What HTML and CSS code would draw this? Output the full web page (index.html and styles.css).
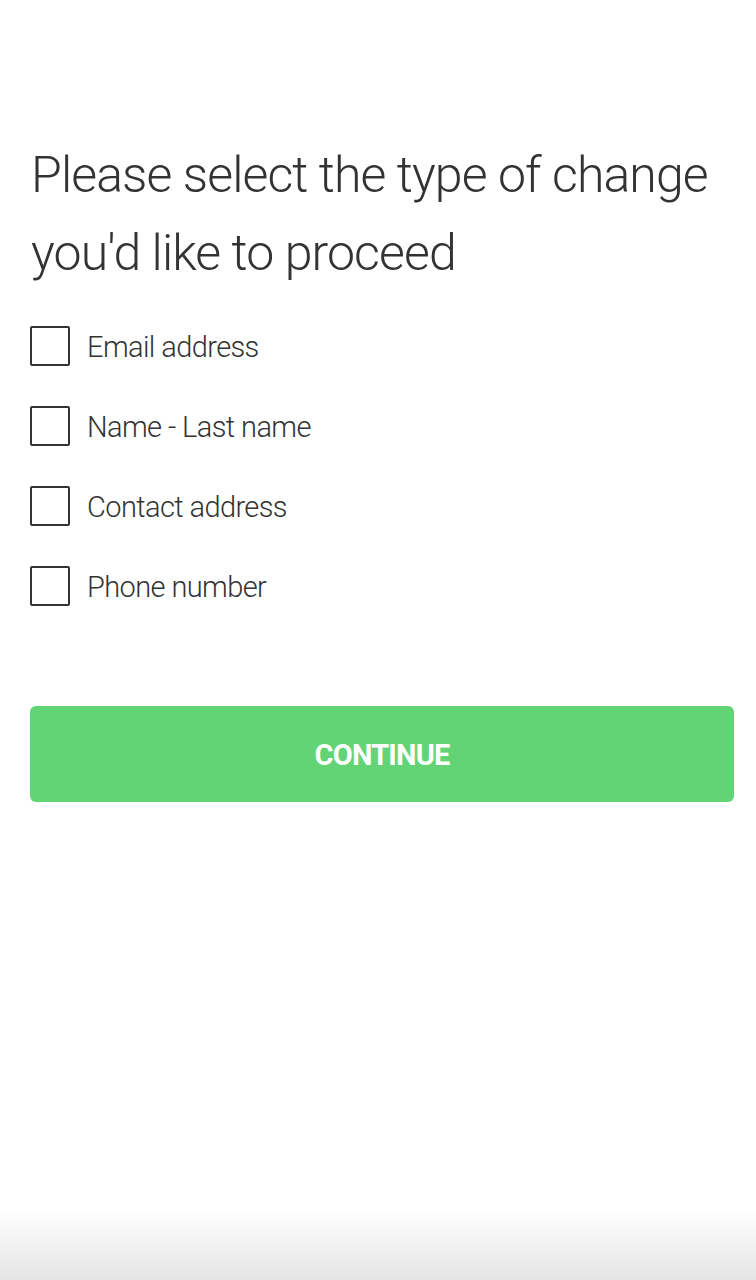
FILE: index.html
```html
<!DOCTYPE html>
<html lang="en">
<head>
<meta charset="utf-8">
<link rel="stylesheet" href="styles.css">
</head>
<body>
<main class="page">
  <h1 class="title">Please select the type of change you'd like to proceed</h1>
  <form class="options">
    <label class="option"><span class="box"></span><span class="label">Email address</span></label>
    <label class="option"><span class="box"></span><span class="label">Name - Last name</span></label>
    <label class="option"><span class="box"></span><span class="label">Contact address</span></label>
    <label class="option"><span class="box"></span><span class="label">Phone number</span></label>
  </form>
  <button class="continue" type="button">CONTINUE</button>
</main>
<div class="fade"></div>
</body>
</html>
```
FILE: styles.css
```css
html, body {
  margin: 0;
  padding: 0;
  background: #fff;
  height: 100%;
}
body {
  font-family: Roboto, "Liberation Sans", sans-serif;
  color: #333;
  position: relative;
  min-height: 1280px;
}
.page {
  padding: 136px 22px 0 30px;
}
.title {
  margin: 0 0 34px 1px;
  font-weight: 300;
  font-size: 50px;
  line-height: 78px;
  letter-spacing: -0.9px;
  color: #333;
}
.options {
  display: flex;
  flex-direction: column;
  gap: 40px;
}
.option {
  display: flex;
  align-items: center;
  gap: 17px;
  height: 40px;
}
.box {
  width: 36px;
  height: 36px;
  border: 2px solid #333;
  border-radius: 2px;
  flex: none;
}
.label {
  font-size: 29px;
  font-weight: 300;
  letter-spacing: -0.6px;
  padding-top: 2px;
}
.continue {
  display: block;
  width: 100%;
  margin-top: 100px;
  height: 96px;
  border: 0;
  border-radius: 6px;
  background: #62d475;
  color: #fff;
  font-family: Roboto, "Liberation Sans", sans-serif;
  font-weight: 700;
  font-size: 29px;
  letter-spacing: -0.8px;
  padding-top: 2px;
}
.fade {
  position: absolute;
  left: 0;
  right: 0;
  bottom: 0;
  height: 70px;
  background: linear-gradient(to bottom, rgba(229,229,229,0), #e4e4e4);
}
```
